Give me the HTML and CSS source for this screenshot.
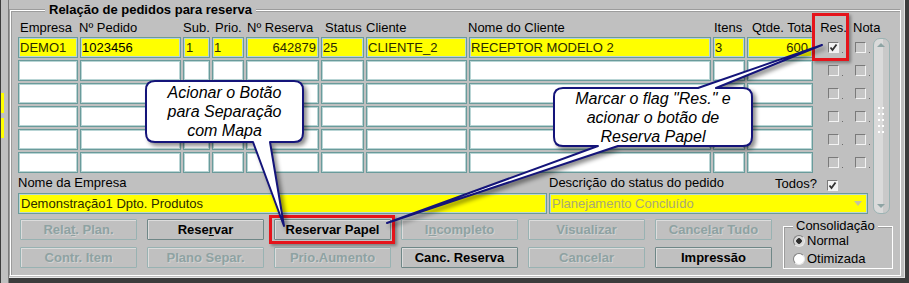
FILE: index.html
```html
<!DOCTYPE html>
<html lang="pt-BR">
<head>
    <meta charset="UTF-8">
    <title>Relação de pedidos para reserva</title>
    <link rel="stylesheet" href="styles.css">
</head>
<body>
<div class="screen">
    <div class="side-strip">
        <div class="side-yellow first"></div>
        <div class="side-yellow"></div>
    </div>

    <div class="window">
        <div class="group">
            <div class="group-title">Relação de pedidos para reserva</div>

            <div class="upper">
                <div class="main">
                    <div class="orders" id="orders">
                        <div class="head h-empresa">Empresa</div>
                        <div class="head h-pedido">Nº Pedido</div>
                        <div class="head">Sub.</div>
                        <div class="head h-prio">Prio.</div>
                        <div class="head h-reserva">Nº Reserva</div>
                        <div class="head h-status">Status</div>
                        <div class="head">Cliente</div>
                        <div class="head h-nome">Nome do Cliente</div>
                        <div class="head h-itens">Itens</div>
                        <div class="head h-qtde">Qtde. Total</div>
                        <div class="head h-res">Res.</div>
                        <div class="head h-nota">Nota</div>
                    </div>

                    <div class="details">
                        <div class="label">Nome da Empresa</div>
                        <div class="label label-split">
                            <span>Descrição do status do pedido</span>
                            <span class="todos">Todos? <span class="check checked"></span></span>
                        </div>
                        <div class="cell yellow">Demonstração1 Dpto. Produtos</div>
                        <div class="cell yellow readonly">Planejamento Concluído<span class="drop-arrow"></span></div>
                    </div>
                </div>

                <div class="scrollbar">
                    <span class="arrow up"></span>
                    <span class="grip"></span>
                    <span class="arrow down"></span>
                </div>
            </div>

            <div class="lower">
                <div class="buttons">
                    <button class="btn" disabled>Rela<u>t</u>. Plan.</button>
                    <button class="btn">Rese<u>r</u>var</button>
                    <button class="btn">Reservar Papel</button>
                    <button class="btn" disabled>I<u>n</u>completo</button>
                    <button class="btn" disabled>Visualizar</button>
                    <button class="btn" disabled>Cance<u>l</u>ar Tudo</button>
                    <button class="btn" disabled>Contr. Item</button>
                    <button class="btn" disabled>Plano Separ.</button>
                    <button class="btn" disabled>Prio.Aumento</button>
                    <button class="btn">Canc. Reserva</button>
                    <button class="btn" disabled>Cancelar</button>
                    <button class="btn">Impressão</button>
                </div>

                <div class="consol">
                    <div class="consol-title">Consolidação</div>
                    <label class="radio-row first"><span class="radio selected"></span>Normal</label>
                    <label class="radio-row"><span class="radio"></span>Otimizada</label>
                </div>
            </div>
        </div>
    </div>

    <!-- marcações do tutorial -->
    <div class="mark mark-res"></div>
    <div class="mark mark-btn"></div>

    <svg class="balloons" width="909" height="283" viewBox="0 0 909 283">
        <path d="M155 81 H294 Q303 81 303 90 V133 Q303 142 294 142 H270 L284 226 L253 142 H155 Q146 142 146 133 V90 Q146 81 155 81 Z"/>
        <path d="M563 88 H698 L822 45 L716 88 H743 Q752 88 752 97 V137 Q752 146 743 146 H618 L387 223 L598 146 H563 Q554 146 554 137 V97 Q554 88 563 88 Z"/>
    </svg>

    <div class="balloon-text left">Acionar o Botão<br>para Separação<br>com Mapa</div>
    <div class="balloon-text right">Marcar o flag "Res." e<br>acionar o botão de<br>Reserva Papel</div>
</div>

<script>
    const pedidos = [
        { empresa: 'DEMO1', pedido: '1023456', sub: '1', prio: '1', reserva: '642879', status: '25',
          cliente: 'CLIENTE_2', nome: 'RECEPTOR MODELO 2', itens: '3', qtde: '600', res: true }
    ];

    // monta as 6 linhas do bloco de pedidos
    function loadOrders() {
        const grid = document.getElementById('orders');
        for (let i = 0; i < 6; i++) {
            const p = pedidos[i];
            const bg = p ? 'yellow' : '';
            const v = p || {};
            grid.insertAdjacentHTML('beforeend', `
                <div class="cell ${bg}">${v.empresa || ''}</div>
                <div class="cell ${bg} current">${v.pedido || ''}</div>
                <div class="cell ${bg} num-pad">${v.sub || ''}</div>
                <div class="cell ${bg}">${v.prio || ''}</div>
                <div class="cell ${bg} right">${v.reserva || ''}</div>
                <div class="cell ${bg}">${v.status || ''}</div>
                <div class="cell ${bg}">${v.cliente || ''}</div>
                <div class="cell ${bg}">${v.nome || ''}</div>
                <div class="cell ${bg}">${v.itens || ''}</div>
                <div class="cell ${bg} right qtde">${v.qtde || ''}</div>
                <span class="check dotted ${v.res ? 'checked' : ''}"></span>
                <span class="check dotted"></span>
            `);
        }
    }

    loadOrders();
</script>
</body>
</html>
```

FILE: styles.css
```css
body {
    margin: 0;
    background-color: #c0c0c0;
    font-family: "Liberation Sans", Arial, sans-serif;
    font-size: 13px;
    color: #000;
}
.screen {
    position: relative;
    display: flex;
    width: 909px;
    height: 283px;
    overflow: hidden;
}
.side-strip {
    width: 7px;
    border-left: 1px solid #3c3c3c;
    border-right: 1px solid #7c7c7c;
    padding-top: 93px;
}
.side-yellow {
    width: 3px;
    height: 20px;
    background-color: #ffff00;
    margin-bottom: 5px;
}
.window {
    flex: 1;
    box-sizing: border-box;
    height: 283px;
    padding: 10px 0 0 1px;
    border-right: 4px solid #3c3c3c;
    border-bottom: 5px solid #3c3c3c;
    box-shadow: inset -1px -1px 0 #e4e4e4;
}
.group {
    box-sizing: border-box;
    height: 266px;
    margin-right: 4px;
    padding-left: 7px;
    border: 1px solid #ffffff;
    box-shadow: inset 1px 1px 0 #9c9c9c, -1px -1px 0 #9c9c9c;
}
.group-title {
    display: table;
    margin: -8px 0 0 27px;
    padding: 0 4px;
    background-color: #c0c0c0;
    font-weight: bold;
    line-height: 14px;
}
.upper {
    display: flex;
    margin-top: 4px;
}
.orders {
    display: grid;
    grid-template-columns: 60px 101px 27px 32px 73px 43px 101px 242px 32px 66px 37px 14px;
    grid-template-rows: 14px repeat(6, 21px);
    column-gap: 2px;
    row-gap: 2px;
}
.head {
    line-height: 14px;
    white-space: nowrap;
}
.h-empresa { padding-left: 2px; }
.h-pedido { margin-left: -1px; }
.h-prio { padding-left: 3px; }
.h-reserva { padding-left: 1px; }
.h-status { padding-left: 4px; }
.h-nome { margin-left: -1px; }
.h-itens { padding-left: 1px; }
.h-qtde { padding-left: 5px; }
.h-res { text-align: center; }
.h-nota { margin-left: -1px; }

.cell {
    box-sizing: border-box;
    height: 21px;
    padding: 0 2px 0 1px;
    line-height: 19px;
    white-space: nowrap;
    overflow: hidden;
    background-color: #ffffff;
    border: 1px solid #6a9b9b;
    box-shadow: inset 0 0 0 1px #b9d5d5;
    color: #2a2a00;
}
.cell.yellow {
    background-color: #ffff00;
}
.cell.current {
    color: #000;
}
.cell.num-pad {
    padding-left: 2px;
}
.cell.right {
    text-align: right;
}
.cell.qtde {
    padding-right: 4px;
}
.check {
    position: relative;
    box-sizing: border-box;
    width: 11px;
    height: 11px;
    align-self: center;
    justify-self: center;
    background-color: #c6c6c6;
    border: 1px solid;
    border-color: #7a7a7a #f4f4f4 #f4f4f4 #7a7a7a;
}
.check.dotted::after {
    content: "";
    position: absolute;
    right: -5px;
    bottom: -1px;
    width: 1px;
    height: 1px;
    background-color: #6c6c6c;
}
.check.checked {
    background: #f2f2f2 url("data:image/svg+xml,%3Csvg xmlns='http://www.w3.org/2000/svg' width='9' height='9'%3E%3Cpath d='M1.5 4.5 L3.5 7 L7.5 1.5' fill='none' stroke='%23303030' stroke-width='1.8'/%3E%3C/svg%3E") no-repeat center;
}
.orders .check:nth-child(12n+11) {
    justify-self: start;
    margin-left: 13px;
}
.orders .check:nth-child(12n) {
    justify-self: start;
    margin-left: 1px;
}

.details {
    display: grid;
    grid-template-columns: 529px 319px;
    grid-template-rows: 17px 21px;
    column-gap: 2px;
    margin-top: 3px;
}
.label {
    line-height: 14px;
    white-space: nowrap;
}
.label-split {
    display: flex;
    justify-content: space-between;
    padding-right: 30px;
}
.todos {
    display: flex;
    gap: 10px;
    margin-top: 1px;
}
.todos .check {
    margin-top: 1px;
}
.details .cell {
    padding-left: 2px;
}
.cell.readonly {
    position: relative;
    color: #a9a877;
}
.drop-arrow {
    position: absolute;
    right: 5px;
    top: 7px;
    border-left: 4px solid transparent;
    border-right: 4px solid transparent;
    border-top: 5px solid #c4c4a0;
}

.scrollbar {
    box-sizing: border-box;
    width: 17px;
    height: 176px;
    margin: 17px 0 0 5px;
    position: relative;
    border: 1px solid #9bb3b3;
    border-radius: 7px;
    background: linear-gradient(to right, #dadada 0 60%, #c9c9c9 60%);
}
.arrow {
    position: absolute;
    left: 3px;
    border-left: 4px solid transparent;
    border-right: 4px solid transparent;
}
.arrow.up {
    top: 4px;
    border-bottom: 4px solid #8ea4a4;
}
.arrow.down {
    bottom: 5px;
    border-top: 4px solid #8ea4a4;
}
.grip {
    position: absolute;
    left: 3px;
    top: 66px;
    width: 7px;
    height: 30px;
    background-image: radial-gradient(circle, #ffffff 0 1px, transparent 1.2px);
    background-size: 4px 6px;
}

.lower {
    display: flex;
    margin-top: 5px;
}
.buttons {
    display: grid;
    grid-template-columns: repeat(6, 117px);
    grid-auto-rows: 21px;
    gap: 7px 10px;
    margin-left: 2px;
}
.btn {
    box-sizing: border-box;
    padding: 0;
    font-family: "Liberation Sans", Arial, sans-serif;
    font-size: 13px;
    font-weight: bold;
    color: #000;
    background-color: #c0c0c0;
    border: 1px solid #6f8787;
    box-shadow: inset 1px 1px 0 #dcdcdc;
    border-radius: 1px;
}
.btn:disabled {
    color: #8ea2a2;
    border-color: #98b2b2;
    text-shadow: 1px 1px 0 #d2d2d2;
}
.btn u {
    text-decoration-thickness: 1px;
}
.consol {
    box-sizing: border-box;
    width: 110px;
    height: 43px;
    margin: 7px 0 0 11px;
    padding-left: 9px;
    border: 1px solid #ffffff;
    box-shadow: inset 1px 1px 0 #9c9c9c;
}
.consol-title {
    display: table;
    margin-top: -8px;
    padding: 0 3px;
    background-color: #c0c0c0;
    line-height: 14px;
}
.radio-row {
    display: flex;
    align-items: center;
    gap: 2px;
    height: 17px;
    margin-bottom: 1px;
    line-height: 14px;
}
.radio-row.first {
    margin-top: -1px;
}
.radio {
    box-sizing: border-box;
    width: 12px;
    height: 12px;
    border-radius: 50%;
    background-color: #ffffff;
    border: 1px solid;
    border-color: #808080 #e8e8e8 #e8e8e8 #808080;
}
.radio.selected {
    background: radial-gradient(circle, #2e2e2e 0 2.5px, #d8d8d8 3px);
}

.mark {
    position: absolute;
    border: 3px solid #e5141b;
    box-shadow: 2px 2px 3px rgba(0, 0, 0, 0.35);
}
.mark-res {
    left: 812px;
    top: 13px;
    width: 31px;
    height: 42px;
}
.mark-btn {
    left: 269px;
    top: 215px;
    width: 120px;
    height: 23px;
}
.balloons {
    position: absolute;
    left: 0;
    top: 0;
    pointer-events: none;
}
.balloons path {
    fill: #ffffff;
    stroke: #14147a;
    stroke-width: 2;
    stroke-linejoin: round;
    filter: drop-shadow(3px 3px 2px rgba(0, 0, 0, 0.45));
}
.balloon-text {
    position: absolute;
    font-style: italic;
    font-size: 16px;
    line-height: 19px;
    text-align: center;
    white-space: nowrap;
}
.balloon-text.left {
    left: 146px;
    top: 83px;
    width: 157px;
}
.balloon-text.right {
    left: 554px;
    top: 89px;
    width: 198px;
}
```
